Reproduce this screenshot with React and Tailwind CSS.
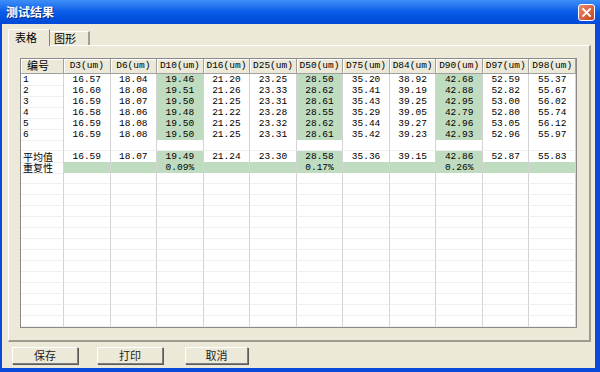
import React from "react";

const heads = ["D3(um)", "D6(um)", "D10(um)", "D16(um)", "D25(um)", "D50(um)", "D75(um)", "D84(um)", "D90(um)", "D97(um)", "D98(um)"];

const rows = [
  ["16.57", "18.04", "19.46", "21.20", "23.25", "28.50", "35.20", "38.92", "42.68", "52.59", "55.37"],
  ["16.60", "18.08", "19.51", "21.26", "23.33", "28.62", "35.41", "39.19", "42.88", "52.82", "55.67"],
  ["16.59", "18.07", "19.50", "21.25", "23.31", "28.61", "35.43", "39.25", "42.95", "53.00", "56.02"],
  ["16.58", "18.06", "19.48", "21.22", "23.28", "28.55", "35.29", "39.05", "42.79", "52.80", "55.74"],
  ["16.59", "18.08", "19.50", "21.25", "23.32", "28.62", "35.44", "39.27", "42.96", "53.05", "56.12"],
  ["16.59", "18.08", "19.50", "21.25", "23.31", "28.61", "35.42", "39.23", "42.93", "52.96", "55.97"],
];

const avg = ["16.59", "18.07", "19.49", "21.24", "23.30", "28.58", "35.36", "39.15", "42.86", "52.87", "55.83"];
const rep = ["", "", "0.09%", "", "", "0.17%", "", "", "0.26%", "", ""];

const green = [2, 5, 8];
const cjk = "font-['Noto_Sans_CJK_SC',sans-serif]";
const mono = "font-['Liberation_Mono',monospace]";

function Row({ label, cells, allGreen, blank, cjkLabel }) {
  return (
    <div className="grid grid-cols-[43px_repeat(11,minmax(0,1fr))] h-[11px]">
      <div className={`${cjkLabel ? cjk + " text-[10px]" : mono + " text-[9.5px]"} leading-[11px] pl-[2px] border-r border-b border-[#d4d4d4] border-b-[#efefef] whitespace-nowrap`}>
        {label}
      </div>
      {Array.from({ length: 11 }).map((_, i) => {
        const g = !blank && (allGreen || green.includes(i));
        return (
          <div
            key={i}
            className={`${mono} text-[9.5px] leading-[11px] text-center border-r border-b border-[#d4d4d4] border-b-[#efefef] ${g ? "bg-[#c0dcc0]" : "bg-white"}`}
          >
            {cells ? cells[i] : ""}
          </div>
        );
      })}
    </div>
  );
}

function Btn({ children, w }) {
  return (
    <button className={`${cjk} ${w} h-[17px] text-[11px] leading-[15px] text-[#222] bg-[#ece9d8] border border-t-white border-l-white border-r-[#808080] border-b-[#808080] shadow-[1px_1px_0_#5a5a5a]`}>
      {children}
    </button>
  );
}

export default function App() {
  return (
    <div className="w-[600px] h-[372px] flex flex-col bg-[#0a4ad8] overflow-hidden">
      {/* title bar */}
      <div className="h-[24px] flex items-center justify-between pl-[6px] pr-[5px] bg-gradient-to-b from-[#3d8ef7] via-[#0a5ce8] to-[#0049d6]">
        <span className={`${cjk} text-white font-bold text-[12px] [text-shadow:1px_1px_0_#0a2a80]`}>测试结果</span>
        <div className="w-[17px] h-[17px] rounded-[3px] border border-white bg-gradient-to-br from-[#e98a6a] to-[#c7401c] flex items-center justify-center">
          <svg width="9" height="9" viewBox="0 0 9 9">
            <path d="M1 1 L8 8 M8 1 L1 8" stroke="white" strokeWidth="1.8" strokeLinecap="square" />
          </svg>
        </div>
      </div>

      {/* body */}
      <div className="flex-1 ml-[2px] mr-[5px] mb-[4px] bg-[#ece9d8] flex flex-col">
        {/* tabs */}
        <div className="flex items-end h-[21px] pl-[6px] relative z-10">
          <div className={`${cjk} w-[42px] h-[17px] -mb-[1px] text-[11px] leading-[15px] pl-[6px] bg-[#ece9d8] border-l border-t border-white border-r border-r-[#808080]`}>
            表格
          </div>
          <div className={`${cjk} w-[40px] h-[14px] text-[11px] leading-[13px] pl-[4px] border-t border-white border-r-2 border-r-[#a09e95]`}>
            图形
          </div>
        </div>

        {/* panel */}
        <div className="ml-[6px] w-[583px] h-[297px] border-l border-t border-white border-r-2 border-b-2 border-r-[#9e9b8f] border-b-[#9e9b8f] pl-[11px] pt-[12px]">
          <div className="w-[557px] h-[270px] border border-[#8a8a8a] bg-white overflow-hidden">
            <div className="grid grid-cols-[43px_repeat(11,minmax(0,1fr))] h-[15px] bg-[#ece9d8] border-b border-[#a0a0a0]">
              <div className={`${cjk} text-[11px] leading-[13px] pl-[6px] border-r border-[#a0a0a0] shadow-[inset_1px_1px_0_#ffffff]`}>编号</div>
              {heads.map((h) => (
                <div key={h} className={`${mono} text-[9.5px] leading-[14px] text-center border-r border-[#a0a0a0] shadow-[inset_1px_1px_0_#ffffff]`}>
                  {h}
                </div>
              ))}
            </div>
            {rows.map((r, i) => (
              <Row key={i} label={String(i + 1)} cells={r} />
            ))}
            <Row blank />
            <Row label="平均值" cells={avg} cjkLabel />
            <Row label="重复性" cells={rep} allGreen cjkLabel />
            {Array.from({ length: 14 }).map((_, i) => (
              <Row key={"e" + i} blank />
            ))}
          </div>
        </div>

        {/* buttons */}
        <div className="flex mt-[5px] pl-[10px]">
          <Btn w="w-[66px]">保存</Btn>
          <div className="w-[19px]" />
          <Btn w="w-[66px]">打印</Btn>
          <div className="w-[22px]" />
          <Btn w="w-[63px]">取消</Btn>
        </div>
      </div>
    </div>
  );
}
